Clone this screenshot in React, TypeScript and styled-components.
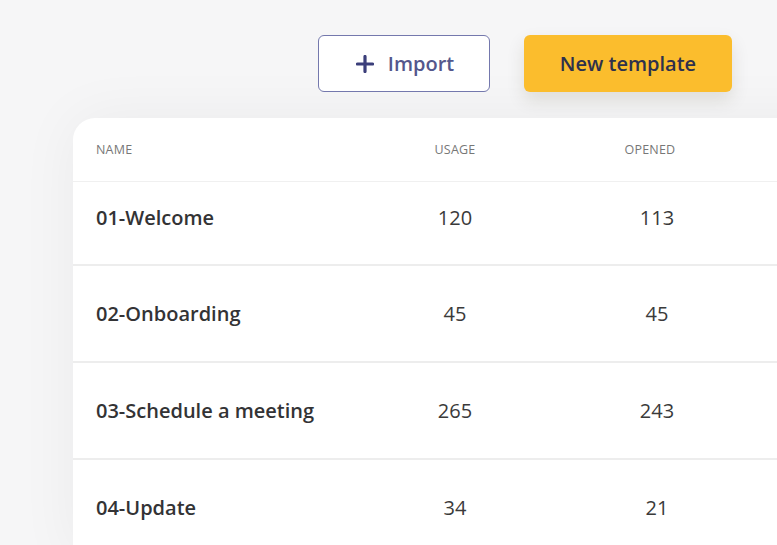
import styled, { createGlobalStyle } from "styled-components"

const GlobalStyle = createGlobalStyle`
  html, body {
    margin: 0;
    padding: 0;
    background: #f6f6f7;
    font-family: "Open Sans", "Noto Sans", Arial, sans-serif;
  }
`

const templates = [
  { name: "01-Welcome", usage: 120, opened: 113 },
  { name: "02-Onboarding", usage: 45, opened: 45 },
  { name: "03-Schedule a meeting", usage: 265, opened: 243 },
  { name: "04-Update", usage: 34, opened: 21 },
]

const PlusIcon = () => (
  <svg width="18" height="18" viewBox="0 0 18 18" fill="none">
    <path d="M9 1.5v15M1.5 9h15" stroke="#3b3e7a" strokeWidth="3.2" strokeLinecap="round" />
  </svg>
)

const App = () => {
  return (
    <Page>
      <GlobalStyle />
      <Toolbar>
        <OutlineButton>
          <PlusIcon />
          Import
        </OutlineButton>
        <PrimaryButton>New template</PrimaryButton>
      </Toolbar>
      <Card>
        <HeadRow>
          <HeadCell>Name</HeadCell>
          <HeadCell align="center">Usage</HeadCell>
          <HeadCell align="center" shift={14}>Opened</HeadCell>
        </HeadRow>
        {templates.map((t, i) => (
          <Row key={t.name} first={i === 0}>
            <NameCell>{t.name}</NameCell>
            <NumCell>{t.usage}</NumCell>
            <NumCell>{t.opened}</NumCell>
          </Row>
        ))}
      </Card>
    </Page>
  )
}

export default App

const Page = styled.div`
  width: 100%;
  height: 545px;
  overflow: hidden;
  box-sizing: border-box;
  padding-top: 35px;
`

const Toolbar = styled.div`
  display: flex;
  justify-content: flex-end;
  gap: 34px;
  padding-right: 45px;
`

const ButtonBase = styled.button`
  height: 57px;
  box-sizing: border-box;
  border-radius: 6px;
  font-family: "Open Sans", Arial, sans-serif;
  font-size: 20px;
  font-weight: 600;
  display: flex;
  align-items: center;
  justify-content: center;
  gap: 14px;
  cursor: pointer;
`

const OutlineButton = styled(ButtonBase)`
  width: 172px;
  background: #ffffff;
  border: 1.5px solid #7478ad;
  color: #54578c;
  padding-right: 4px;
`

const PrimaryButton = styled(ButtonBase)`
  width: 208px;
  background: #fbbd2d;
  border: none;
  color: #2e304c;
  box-shadow: 0 8px 18px rgba(60, 50, 20, 0.12);
`

const Card = styled.div`
  margin: 26px -60px 0 73px;
  background: #ffffff;
  border-radius: 22px 0 0 0;
  box-shadow: 0 0 60px rgba(0, 0, 0, 0.05);
`

const grid = `
  display: grid;
  grid-template-columns: 284px 150px 52px 150px 1fr;
  padding-left: 23px;
  align-items: center;
  box-sizing: border-box;
`

const HeadRow = styled.div`
  ${grid}
  height: 64px;
  border-bottom: 1.5px solid #f0f0f0;
  & > :nth-child(3) {
    grid-column: 4;
  }
`

const HeadCell = styled.div<{ align?: string; shift?: number }>`
  font-size: 12.5px;
  letter-spacing: 0.2px;
  text-transform: uppercase;
  color: #777777;
  text-align: ${(p) => p.align || "left"};
  padding-right: ${(p) => p.shift || 0}px;
`

const Row = styled.div<{ first?: boolean }>`
  ${grid}
  height: ${(p) => (p.first ? 84 : 97)}px;
  padding-bottom: ${(p) => (p.first ? 12 : 0)}px;
  border-bottom: 2px solid #ededed;
  & > :nth-child(3) {
    grid-column: 4;
  }
`

const NameCell = styled.div`
  font-size: 20px;
  font-weight: 600;
  color: #333335;
`

const NumCell = styled.div`
  font-size: 20px;
  color: #3a3a3a;
  text-align: center;
`
